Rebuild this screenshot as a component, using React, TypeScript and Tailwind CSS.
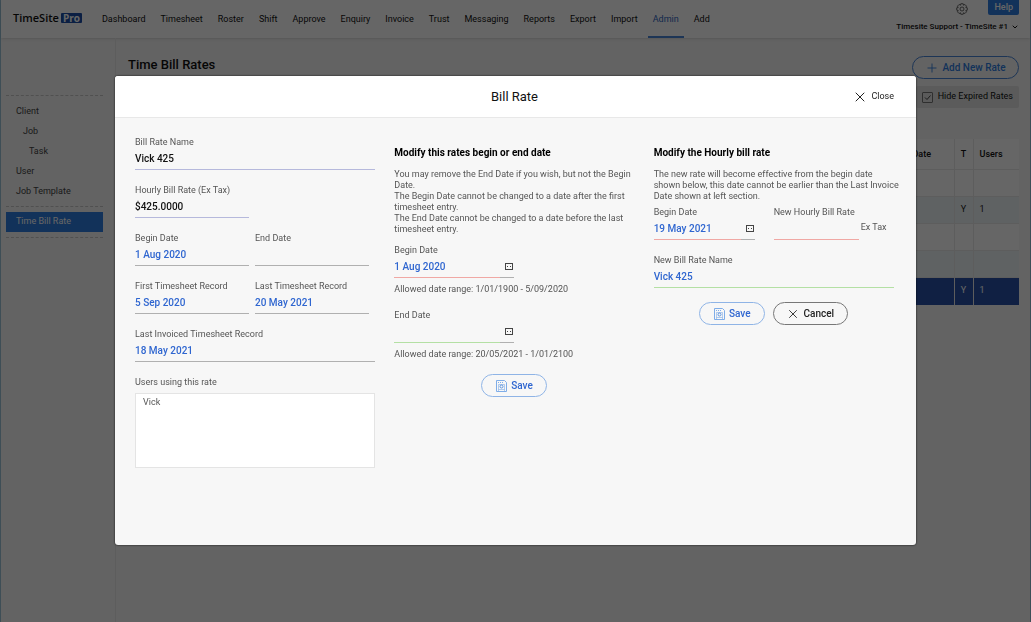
import { useId } from 'react';
import type { ReactNode } from 'react';
import { Plus, X, ChevronDown } from 'lucide-react';

// --- CONSTANTS ---
const NAV = ['Dashboard', 'Timesheet', 'Roster', 'Shift', 'Approve', 'Enquiry', 'Invoice', 'Trust', 'Messaging', 'Reports', 'Export', 'Import', 'Admin', 'Add'];

const SIDE_LINKS = [
  { label: 'Client', pad: 'pl-[10px]' },
  { label: 'Job', pad: 'pl-[17px]' },
  { label: 'Task', pad: 'pl-[23px]' },
  { label: 'User', pad: 'pl-[10px]' },
  { label: 'Job Template', pad: 'pl-[10px]' },
];

const ROWS = [
  { t: '', users: '', style: 'bg-white' },
  { t: 'Y', users: '1', style: 'bg-[#eef6f7]' },
  { t: '', users: '', style: 'bg-white' },
  { t: '', users: '', style: 'bg-[#eef6f7]' },
  { t: 'Y', users: '1', style: 'bg-[#2a52a8] text-white' },
];

// --- ICONS ---
const GearIcon = () => (
  <svg viewBox="0 0 24 24" className="h-3 w-3" fill="none" stroke="#444" strokeWidth="1.6" strokeLinejoin="round">
    <path d="M9.6 1.5h4.8l.7 3 2.6-1.6 3.4 3.4-1.6 2.6 3 .7v4.8l-3 .7 1.6 2.6-3.4 3.4-2.6-1.6-.7 3H9.6l-.7-3-2.6 1.6-3.4-3.4 1.6-2.6-3-.7V9.6l3-.7-1.6-2.6 3.4-3.4 2.6 1.6z" />
    <circle cx="12" cy="12" r="4" />
  </svg>
);

const CalendarIcon = () => (
  <svg viewBox="0 0 8 8" className="h-2 w-2" fill="none" stroke="#444" shapeRendering="crispEdges">
    <path d="M.5 .5h7v6h-7z" />
    <path d="M2 3.500h1M5 3.500h1" />
  </svg>
);

const DiskIcon = () => (
  <svg viewBox="0 0 11 12" className="h-3 w-[11px]" fill="none" stroke="#7fade8">
    <path d="M.5 .5h8l2 2v9H.5z" />
    <path d="M2 2.500h6" strokeDasharray="1 1" />
    <path d="M2.500 11V4.500h6V11M2.500 9.500h6" strokeWidth="0.6" />
    <circle cx="5.500" cy="6.500" r="1.500" stroke="#4f8bdc" strokeWidth="0.9" />
  </svg>
);

// --- FORM PARTS ---
type FieldProps = {
  label: string; value?: string; text?: string; line?: string;
  readOnly?: boolean; calendar?: boolean; className?: string;
};

const Field = ({ label, value = '', text = 'text-[#2f66d0]', line = 'border-[#b0b0b0]', readOnly, calendar, className = '' }: FieldProps) => {
  const id = useId();
  return (
    <div className={className}>
      <label htmlFor={id} className="block leading-3 whitespace-nowrap">{label}</label>
      <div className="flex h-[22px]">
        <input id={id} type="text" defaultValue={value} readOnly={readOnly} className={`w-full min-w-0 flex-1 border-b bg-transparent pb-px text-[10px] font-medium outline-none ${line} ${text}`} />
        {calendar && (
          <button type="button" aria-label={`Pick ${label}`} className="flex w-[14px] items-center justify-end border-b border-[#b0b0b0] pr-px">
            <CalendarIcon />
          </button>
        )}
      </div>
    </div>
  );
};

const PillButton = ({ children, className }: { children: ReactNode; className: string }) => (
  <button type="button" className={`flex h-[23px] items-center justify-center rounded-full border text-[10px] font-medium ${className}`}>
    {children}
  </button>
);

const SaveButton = () => (
  <PillButton className="w-[66px] gap-1 border-[#8fb4e6] text-[#2f66d0]">
    <DiskIcon />
    Save
  </PillButton>
);

// --- PAGE BEHIND THE DIALOG ---
const Header = () => (
  <header className="flex h-[38px] justify-between bg-white pr-[11px] pl-3 shadow-sm">
    <div className="flex">
      <div className="flex h-[36px] items-center gap-[2px] text-[11px] font-semibold text-[#111]">
        <span className="font-['Open_Sans',sans-serif]">TimeSite</span>
        <span className="rounded-[1px] bg-[#1c4fa8] px-[2px] font-['Open_Sans',sans-serif] text-[10px] leading-[10px] font-bold text-white">Pro</span>
      </div>
      <nav className="ml-[15px] flex gap-[5px]">
        {NAV.map(item => (
          <a key={item} href="#" className={`flex items-center border-b-2 px-[5px] pt-[3px] ${item === 'Admin' ? 'border-[#4a86d8] text-[#2f66c0]' : 'border-transparent text-[#111]'}`}>{item}</a>
        ))}
      </nav>
    </div>
    <div className="flex flex-col items-end">
      <div className="flex items-center gap-5">
        <button type="button" aria-label="Settings" className="pt-[2px]"><GearIcon /></button>
        <button type="button" className="h-[15px] rounded-b-[2px] bg-[#2f7de0] px-[6px] font-medium text-white">Help</button>
      </div>
      <button type="button" className="mt-[6px] flex items-center gap-[3px] text-[8px] leading-3 font-medium whitespace-nowrap text-[#111]">
        Timesite Support - TimeSite #1
        <ChevronDown className="h-2 w-2" strokeWidth={3} />
      </button>
    </div>
  </header>
);

const Sidebar = () => (
  <aside className="w-[115px] shrink-0 border-r border-[#e8e8e8] pr-3 pl-[5px] pt-[57px]">
    <ul className="border-y border-dashed border-[#c8c8c8] py-[5px]">
      {SIDE_LINKS.map(l => (
        <li key={l.label} className={`flex h-[20px] items-center pt-px ${l.pad}`}>
          <a href="#">{l.label}</a>
        </li>
      ))}
    </ul>
    <div className="border-b border-dashed border-[#c8c8c8] py-[5px]">
      <a href="#" className="flex h-[20px] items-center bg-[#2f7de0] pl-[10px] text-white">Time Bill Rate</a>
    </div>
  </aside>
);

const RatesTable = () => (
  <table className="mt-[31px] w-full border-collapse text-left text-[#222]">
    <thead>
      <tr className="h-[30px] border-b border-[#e8e8e8] bg-white text-[#111]">
        <th className="pt-[2px] font-medium">Name</th>
        <th className="w-[67px] border-r border-[#e8e8e8] pt-[2px] pl-2 font-medium">End Date</th>
        <th className="w-[19px] border-r border-[#e8e8e8] pt-[2px] text-center font-medium">T</th>
        <th className="w-[46px] pt-[2px] pl-[6px] font-medium">Users</th>
      </tr>
    </thead>
    <tbody>
      {ROWS.map((r, i) => (
        <tr key={i} className={`h-[27px] border-b border-[#e8e8e8] last:border-[#2a52a8] ${r.style}`}>
          <td></td>
          <td className="border-r border-[#e8e8e8]"></td>
          <td className="border-r border-[#e8e8e8] text-center">{r.t}</td>
          <td className="pl-[6px]">{r.users}</td>
        </tr>
      ))}
    </tbody>
  </table>
);

// --- DIALOG ---
const BillRateDialog = () => (
  <div className="fixed inset-0 flex items-center justify-center bg-black/60 pb-px">
    <div role="dialog" aria-labelledby="dialog-title" className="w-full max-w-[801px] rounded-[3px] bg-[#f7f7f7] text-[#555] shadow-[0_0_2px_#000]">
      <div className="grid h-[42px] grid-cols-3 items-center rounded-t-[3px] border-b border-[#e8e8e8] bg-white pr-[22px] pl-5">
        <h2 id="dialog-title" className="col-start-2 text-center text-[13px] text-[#111]">Bill Rate</h2>
        <button type="button" className="flex items-center gap-[3px] justify-self-end text-[#222]">
          <X className="h-4 w-4" strokeWidth={1.5} />
          Close
        </button>
      </div>

      <form className="grid grid-cols-3 gap-[19px] pt-[18px] pr-[22px] pb-[77px] pl-5">
        {/* Current rate */}
        <section className="flex flex-col gap-[14px]">
          <Field label="Bill Rate Name" value="Vick 425" text="text-[#111]" line="border-[#b6b9dc]" readOnly />
          <Field label="Hourly Bill Rate (Ex Tax)" value="$425.0000" text="text-[#111]" line="border-[#b6b9dc]" className="w-[114px]" readOnly />
          <div className="flex gap-[6px]">
            <Field label="Begin Date" value="1 Aug 2020" className="w-[114px]" readOnly />
            <Field label="End Date" className="w-[114px]" readOnly />
          </div>
          <div className="flex gap-[6px]">
            <Field label="First Timesheet Record" value="5 Sep 2020" className="w-[114px]" readOnly />
            <Field label="Last Timesheet Record" value="20 May 2021" className="w-[114px]" readOnly />
          </div>
          <Field label="Last Invoiced Timesheet Record" value="18 May 2021" readOnly />
          <div className="flex flex-col gap-[5px]">
            <label htmlFor="rate-users" className="leading-3">Users using this rate</label>
            <textarea id="rate-users" readOnly defaultValue="Vick" className="h-[75px] resize-none border border-[#e4e4e4] bg-white px-[7px] py-[2px] leading-3 outline-none" />
          </div>
        </section>

        {/* Change dates */}
        <section className="pt-[11px]">
          <h3 className="text-[10px] leading-3 font-bold text-black">Modify this rates begin or end date</h3>
          <p className="mt-[10px] leading-[11px]">
            You may remove the End Date if you wish, but not the Begin Date.<br />
            The Begin Date cannot be changed to a date after the first timesheet entry.<br />
            The End Date cannot be changed to a date before the last timesheet entry.
          </p>
          <Field label="Begin Date" value="1 Aug 2020" line="border-[#f0a8a4]" className="mt-[9px] w-[120px]" calendar />
          <p className="mt-[5px] leading-3">Allowed date range: 1/01/1900 - 5/09/2020</p>
          <Field label="End Date" line="border-[#b4e0a4]" className="mt-[14px] w-[120px]" calendar />
          <p className="mt-[5px] leading-3">Allowed date range: 20/05/2021 - 1/01/2100</p>
          <div className="mt-[14px] flex justify-center">
            <SaveButton />
          </div>
        </section>

        {/* Change rate */}
        <section className="pt-[11px]">
          <h3 className="text-[10px] leading-3 font-bold text-black">Modify the Hourly bill rate</h3>
          <p className="mt-[10px] -mr-2 leading-[11px]">
            The new rate will become effective from the begin date<br />
            shown below, this date cannot be earlier than the Last Invoice Date shown at left section.
          </p>
          <div className="mt-1 flex items-end">
            <Field label="Begin Date" value="19 May 2021" line="border-[#f0a8a4]" className="w-[101px]" calendar />
            <Field label="New Hourly Bill Rate" line="border-[#f0a8a4]" className="ml-[19px] w-[85px]" />
            <span className="ml-[2px] pb-[7px] leading-3">Ex Tax</span>
          </div>
          <Field label="New Bill Rate Name" value="Vick 425" line="border-[#b4e0a4]" className="mt-[14px]" />
          <div className="mt-[14px] flex justify-center gap-2">
            <SaveButton />
            <PillButton className="w-[75px] gap-1 border-[#777] pr-[2px] text-[#222]">
              <X className="h-[14px] w-[14px]" strokeWidth={1.5} />
              Cancel
            </PillButton>
          </div>
        </section>
      </form>
    </div>
  </div>
);

export default function App() {
  return (
    <div className="flex min-h-screen flex-col border-x border-[#9cc4d8] bg-[#f7f7f7] font-[Roboto,sans-serif] text-[9px] text-[#444]">
      <Header />
      <div className="flex flex-1">
        <Sidebar />
        <main className="min-w-0 flex-1 pt-[18px] pr-[11px] pl-3">
          <div className="flex items-start justify-between">
            <h1 className="text-[13px] leading-[18px] font-medium text-[#111]">Time Bill Rates</h1>
            <PillButton className="w-[107px] gap-[3px] border-[#4a86d8] text-[#2f7de0]">
              <Plus className="h-[14px] w-[14px]" strokeWidth={1.5} />
              Add New Rate
            </PillButton>
          </div>
          <div className="mt-[7px] flex justify-end">
            <label className="flex h-[22px] items-center gap-[5px] rounded-[2px] bg-[#e4e4e4] px-[6px] text-[#111]">
              <span className="grid h-[11px] w-[11px]">
                <input type="checkbox" defaultChecked className="peer col-start-1 row-start-1 appearance-none rounded-[1px] border border-[#777]" />
                <svg viewBox="0 0 11 11" className="pointer-events-none col-start-1 row-start-1 hidden peer-checked:block" fill="none" stroke="#444">
                  <path d="M3 5.500l2 2 3.500-4" />
                </svg>
              </span>
              Hide Expired Rates
            </label>
          </div>
          <RatesTable />
        </main>
      </div>
      <BillRateDialog />
    </div>
  );
}
